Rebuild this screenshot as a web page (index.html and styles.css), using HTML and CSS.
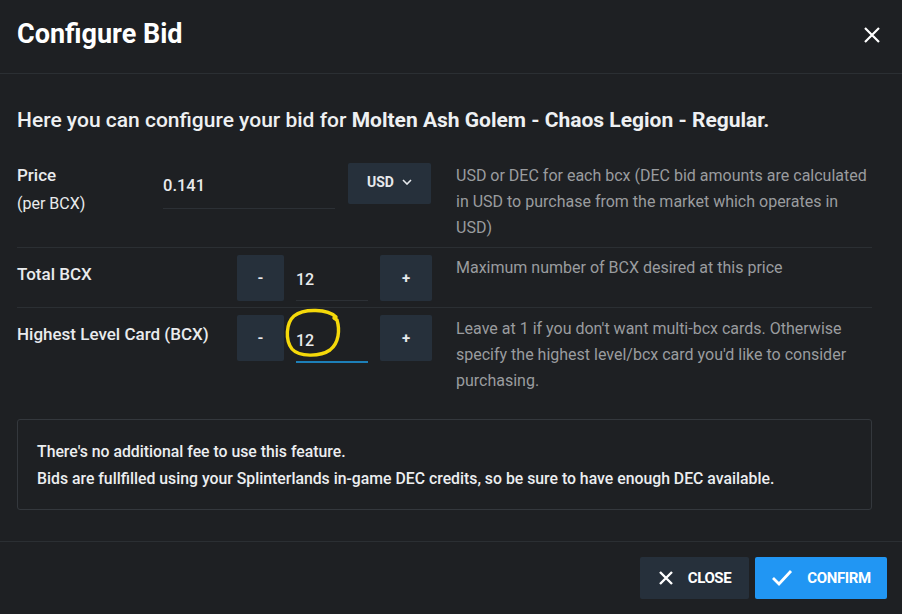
FILE: index.html
```html
<!DOCTYPE html>
<html lang="en">
<head>
    <meta charset="UTF-8">
    <title>Configure Bid</title>
    <link rel="stylesheet" href="styles.css">
</head>
<body>
    <div class="modal">
        <div class="modal-header">
            <h2>Configure Bid</h2>
            <button class="close-x" aria-label="Close">
                <svg width="18" height="18" viewBox="0 0 18 18"><path d="M2 2 L16 16 M16 2 L2 16" stroke="#fff" stroke-width="2.2" fill="none"/></svg>
            </button>
        </div>

        <div class="modal-body">
            <p class="intro">Here you can configure your bid for <b>Molten Ash Golem - Chaos Legion - Regular.</b></p>

            <div class="form-row row-price">
                <label class="row-label price-label">Price<br><span class="sub">(per BCX)</span></label>
                <div class="controls">
                    <input class="price-input" type="text" value="0.141">
                    <button class="currency">USD
                        <svg width="10" height="6" viewBox="0 0 10 6"><path d="M1 1 L5 5 L9 1" stroke="#e6e9ec" stroke-width="1.6" fill="none"/></svg>
                    </button>
                </div>
                <div class="desc">USD or DEC for each bcx (DEC bid amounts are calculated in USD to purchase from the market which operates in USD)</div>
            </div>

            <div class="form-row row-total">
                <label class="row-label">Total BCX</label>
                <div class="controls stepper">
                    <button class="step">-</button>
                    <input class="step-input" type="text" value="12">
                    <button class="step plus">+</button>
                </div>
                <div class="desc">Maximum number of BCX desired at this price</div>
            </div>

            <div class="form-row last">
                <label class="row-label">Highest Level Card (BCX)</label>
                <div class="controls stepper">
                    <button class="step">-</button>
                    <div class="step-wrap">
                        <input class="step-input focused" type="text" value="12">
                        <svg class="circle" width="58" height="50" viewBox="0 0 58 50"><path d="M52 9 C44 1 20 0 10 8 C2 15 1 32 8 41 C15 49 36 49 46 42 C55 35 56 22 53 12 L50 10" stroke="#f5d90a" stroke-width="3.4" fill="none" stroke-linecap="round"/></svg>
                    </div>
                    <button class="step plus">+</button>
                </div>
                <div class="desc">Leave at 1 if you don't want multi-bcx cards. Otherwise specify the highest level/bcx card you'd like to consider purchasing.</div>
            </div>

            <div class="info-box">
                <p>There's no additional fee to use this feature.</p>
                <p>Bids are fullfilled using your Splinterlands in-game DEC credits, so be sure to have enough DEC available.</p>
            </div>
        </div>

        <div class="modal-footer">
            <button class="btn btn-close">
                <svg width="16" height="16" viewBox="0 0 16 16"><path d="M2 2 L14 14 M14 2 L2 14" stroke="#fff" stroke-width="2.4" fill="none"/></svg>
                CLOSE
            </button>
            <button class="btn btn-confirm">
                <svg width="22" height="18" viewBox="0 0 22 18"><path d="M2 9 L8 15 L20 2" stroke="#fff" stroke-width="2.8" fill="none"/></svg>
                CONFIRM
            </button>
        </div>
    </div>
</body>
</html>
```

FILE: styles.css
```css
body {
    margin: 0;
    background: #1e2023;
    font-family: Roboto, "Liberation Sans", Arial, sans-serif;
    color: #e9ebed;
}
.modal {
    width: 902px;
    height: 614px;
    display: flex;
    flex-direction: column;
    background: #1e2023;
}
.modal-header {
    height: 74px;
    display: flex;
    align-items: center;
    justify-content: space-between;
    padding: 0 21px 0 17px;
    border-bottom: 1px solid #2b2f33;
    box-sizing: border-box;
}
.modal-header h2 {
    margin: 0 0 6px 0;
    font-size: 27px;
    font-weight: 700;
    color: #fff;
}
.close-x {
    background: none;
    border: none;
    padding: 0;
    margin-bottom: 4px;
    display: flex;
}
.modal-body {
    flex: 1;
    padding: 0 30px 0 17px;
}
.intro {
    margin: 33px 0 29px 0;
    font-size: 21px;
    font-weight: 500;
    line-height: 26px;
    color: #eef0f2;
}
.intro b {
    font-weight: 700;
}
.form-row {
    display: grid;
    grid-template-columns: 122px 269px 1fr;
    column-gap: 24px;
    padding: 7px 0 6px 0;
    border-bottom: 1px solid #2b2f33;
}
.form-row.row-price {
    padding-top: 1px;
}
.form-row.last {
    border-bottom: none;
}
.row-label {
    font-size: 17px;
    font-weight: 500;
    line-height: 26px;
    padding-top: 6px;
    white-space: nowrap;
    color: #e9ebed;
}
.price-label {
    line-height: 28px;
    padding-top: 0;
    margin-top: -2px;
}
.price-label .sub {
    font-size: 16px;
    font-weight: 400;
}
.controls {
    display: flex;
    align-items: flex-start;
}
.price-input {
    width: 172px;
    height: 46px;
    box-sizing: border-box;
    background: transparent;
    border: none;
    border-bottom: 1px solid #2c3035;
    color: #e9ebed;
    font-family: inherit;
    font-size: 16.5px;
    font-weight: 500;
    padding: 0 0 0 0;
}
.currency {
    margin-left: 13px;
    width: 83px;
    height: 41px;
    background: #26303b;
    border: none;
    border-radius: 2px;
    color: #e6e9ec;
    font-family: inherit;
    font-size: 14px;
    font-weight: 700;
    display: flex;
    align-items: center;
    justify-content: center;
    gap: 8px;
    padding-bottom: 4px;
}
.stepper {
    justify-content: flex-end;
    gap: 12px;
}
.step {
    width: 47px;
    height: 46px;
    background: #26303b;
    border: none;
    border-radius: 2px;
    color: #e6e9ec;
    font-family: inherit;
    font-size: 15px;
    font-weight: 700;
    padding: 0;
}
.step.plus {
    width: 52px;
}
.step-wrap {
    position: relative;
}
.step-input {
    width: 72px;
    height: 46px;
    box-sizing: border-box;
    background: transparent;
    border: none;
    border-bottom: 1px solid #2c3035;
    color: #e9ebed;
    font-family: inherit;
    font-size: 16px;
    font-weight: 500;
    padding: 4px 0 0 0;
}
.step-input.focused {
    border-bottom: 2px solid #1d7fb8;
    height: 48px;
    padding-top: 4px;
}
.circle {
    position: absolute;
    left: -12px;
    top: -7px;
    pointer-events: none;
}
.desc {
    font-size: 16px;
    line-height: 26px;
    color: #9a9c9f;
    min-height: 78px;
}
.row-total .desc {
    min-height: 46px;
}
.form-row.last .desc {
    padding-top: 1px;
}
.info-box {
    margin-top: 19px;
    border: 1px solid #34383d;
    border-radius: 3px;
    padding: 18px 20px 17px 19px;
    width: 855px;
    box-sizing: border-box;
}
.info-box p {
    margin: 0;
    font-size: 15.8px;
    font-weight: 500;
    line-height: 27px;
    color: #eceef0;
}
.modal-footer {
    border-top: 1px solid #2b2f33;
    height: 73px;
    display: flex;
    justify-content: flex-end;
    align-items: flex-start;
    gap: 6px;
    padding: 15px 15px 0 0;
    box-sizing: border-box;
}
.btn {
    height: 42px;
    border: none;
    border-radius: 2px;
    color: #fff;
    font-family: inherit;
    font-size: 15px;
    font-weight: 700;
    letter-spacing: -0.4px;
    display: flex;
    align-items: center;
    justify-content: center;
    gap: 14px;
}
.btn-close {
    width: 109px;
    background: #26303b;
}
.btn-confirm {
    width: 132px;
    background: #2196f3;
}
```
